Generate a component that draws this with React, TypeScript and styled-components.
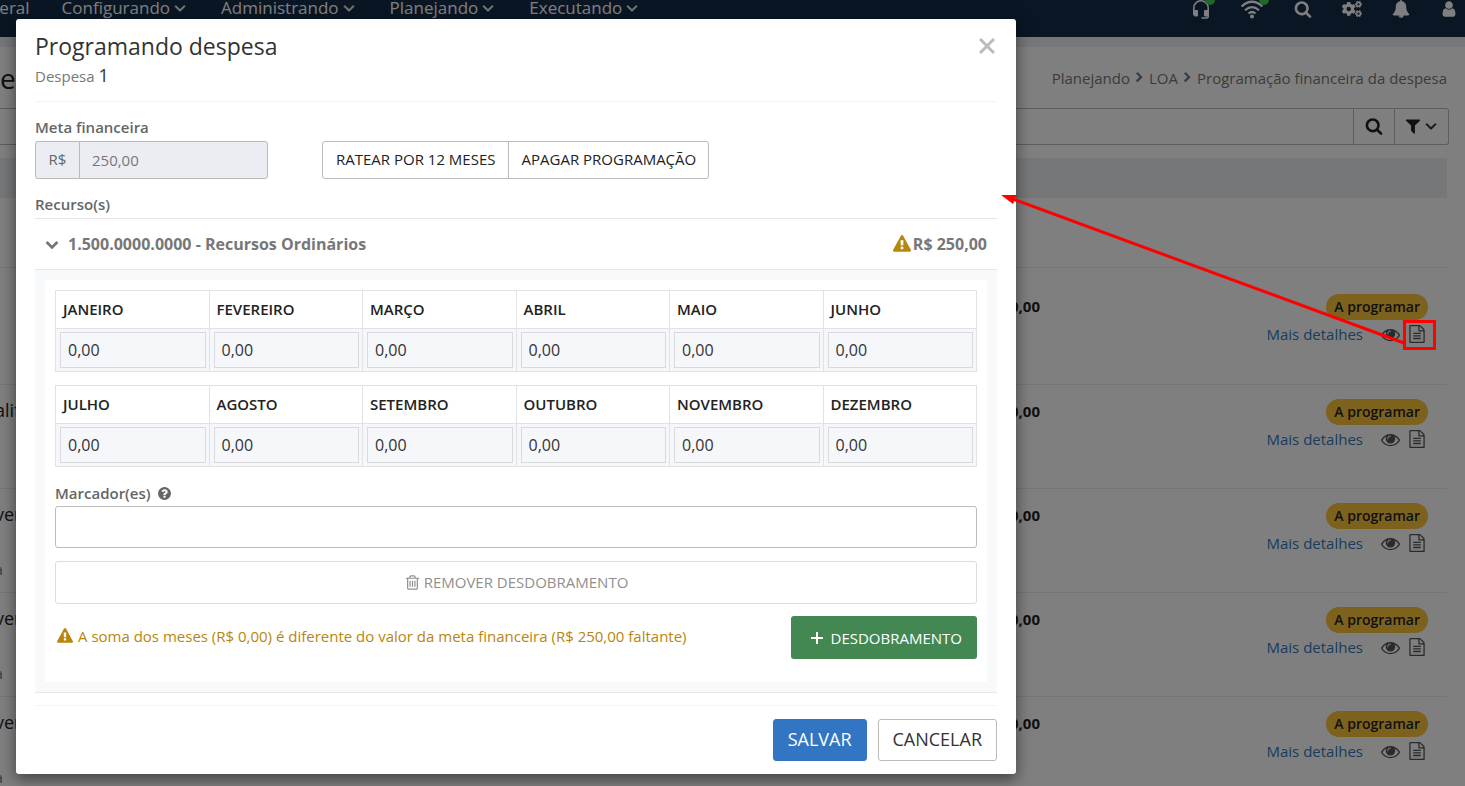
import React from "react";
import styled, { createGlobalStyle } from "styled-components";
import { FaCogs } from "react-icons/fa";

const GlobalStyle = createGlobalStyle`
  *, *::before, *::after { box-sizing: border-box; }
  body {
    margin: 0;
    background: #fff;
    color: #222;
    font: 15px/20px "Open Sans", "Noto Sans", sans-serif;
  }
  button, input { font: inherit; color: inherit; }
  button { cursor: pointer; }
`;

/* ---------- icons ---------- */

const paths = {
  search:
    "M1216 832q0-185-131.5-316.5t-316.5-131.5-316.5 131.5-131.5 316.5 131.5 316.5 316.5 131.5 316.5-131.5 131.5-316.5zm512 832q0 52-38 90t-90 38q-54 0-90-38l-343-342q-179 124-399 124-143 0-273.5-55.5t-225-150-150-225-55.5-273.5 55.5-273.5 150-225 225-150 273.5-55.5 273.5 55.5 225 150 150 225 55.5 273.5q0 220-124 399l343 343q37 37 37 90z",
  bell:
    "M912 1696q0-16-16-16-59 0-101.5-42.5t-42.5-101.5q0-16-16-16t-16 16q0 73 51.5 124.5t124.5 51.5q16 0 16-16zm816-288q0 52-38 90t-90 38h-448q0 106-75 181t-181 75-181-75-75-181h-448q-52 0-90-38t-38-90q50-42 91-88t85-119.5 74.5-158.5 50-206 19.5-260q0-152 117-282.5t307-158.5q-8-19-8-39 0-40 28-68t68-28 68 28 28 68q0 20-8 39 190 28 307 158.5t117 282.5q0 139 19.5 260t50 206 74.5 158.5 85 119.5 91 88z",
  user:
    "M1536 1399q0 109-62.5 187t-150.5 78h-854q-88 0-150.5-78t-62.5-187q0-85 8.5-160.5t31.5-152 58.5-131 94-89 134.5-34.5q131 128 313 128t313-128q76 0 134.5 34.5t94 89 58.5 131 31.5 152 8.5 160.5zm-256-887q0 159-112.5 271.5t-271.5 112.5-271.5-112.5-112.5-271.5 112.5-271.5 271.5-112.5 271.5 112.5 112.5 271.5z",
  filter:
    "M1595 295q17 41-14 70l-493 493v742q0 42-39 59-13 5-25 5-27 0-45-19l-256-256q-19-19-19-45v-486l-493-493q-31-29-14-70 17-39 59-39h1280q42 0 59 39z",
  eye:
    "M1664 960q-152-236-381-353 61 104 61 225 0 185-131.5 316.5t-316.5 131.5-316.5-131.5-131.5-316.5q0-121 61-225-229 117-381 353 133 205 333.5 326.5t434.5 121.5 434.5-121.5 333.5-326.5zm-720-384q0-20-14-34t-34-14q-125 0-214.5 89.5t-89.5 214.5q0 20 14 34t34 14 34-14 14-34q0-86 61-147t147-61q20 0 34-14t14-34zm848 384q0 34-20 69-140 230-376.5 368.5t-499.5 138.5-499.5-139-376.5-368q-20-35-20-69t20-69q140-229 376.5-368t499.5-139 499.5 139 376.5 368q20 35 20 69z",
  file:
    "M1596 380q28 28 48 76t20 88v1152q0 40-28 68t-68 28h-1344q-40 0-68-28t-28-68v-1600q0-40 28-68t68-28h896q40 0 88 20t76 48zm-444-244v376h376q-10-29-22-41l-313-313q-12-12-41-22zm384 1528v-1024h-416q-40 0-68-28t-28-68v-416h-768v1536h1280zm-1024-864q0-14 9-23t23-9h704q14 0 23 9t9 23v64q0 14-9 23t-23 9h-704q-14 0-23-9t-9-23v-64zm736 224q14 0 23 9t9 23v64q0 14-9 23t-23 9h-704q-14 0-23-9t-9-23v-64q0-14 9-23t23-9h704zm0 256q14 0 23 9t9 23v64q0 14-9 23t-23 9h-704q-14 0-23-9t-9-23v-64q0-14 9-23t23-9h704z",
  warning:
    "M1024 1375v-190q0-14-9.5-23.5t-22.5-9.5h-192q-13 0-22.5 9.5t-9.5 23.5v190q0 14 9.5 23.5t22.5 9.5h192q13 0 22.5-9.5t9.5-23.5zm-2-374l18-459q0-12-10-19-13-11-24-11h-220q-11 0-24 11-10 7-10 21l17 457q0 10 10 16.5t24 6.5h185q14 0 23.5-6.5t10.5-16.5zm-14-934l768 1408q35 63-2 126-17 29-46.5 46t-63.5 17h-1536q-34 0-63.5-17t-46.5-46q-37-63-2-126l768-1408q17-31 47-49t65-18 65 18 47 49z",
  question:
    "M1024 1376v-192q0-14-9-23t-23-9h-192q-14 0-23 9t-9 23v192q0 14 9 23t23 9h192q14 0 23-9t9-23zm256-672q0-88-55.5-163t-138.5-116-170-41q-243 0-371 213-15 24 8 42l132 100q7 6 19 6 16 0 25-12 53-68 86-92 34-24 86-24 48 0 85.5 26t37.5 59q0 38-20 61t-68 45q-63 28-115.5 86.5t-52.5 125.5v36q0 14 9 23t23 9h192q14 0 23-9t9-23q0-19 21.5-49.5t54.5-49.5q32-18 49-28.5t46-35 44.5-48 28-60.5 12.5-81zm384 192q0 209-103 385.5t-279.5 279.5-385.5 103-385.5-103-279.5-279.5-103-385.5 103-385.5 279.5-279.5 385.5-103 385.5 103 279.5 279.5 103 385.5z",
  angleDown:
    "M1395 736q0 13-10 23l-466 466q-10 10-23 10t-23-10l-466-466q-10-10-10-23t10-23l50-50q10-10 23-10t23 10l393 393 393-393q10-10 23-10t23 10l50 50q10 10 10 23z",
  chevronDown:
    "M1683 808l-742 741q-19 19-45 19t-45-19l-742-741q-19-19-19-45.5t19-45.5l166-165q19-19 45-19t45 19l531 531 531-531q19-19 45-19t45 19l166 165q19 19 19 45.5t-19 45.5z",
  chevronRight:
    "M1363 877l-742 742q-19 19-45 19t-45-19l-166-166q-19-19-19-45t19-45l531-531-531-531q-19-19-19-45t19-45l166-166q19-19 45-19t45 19l742 742q19 19 19 45t-19 45z",
  trash:
    "M704 736v576q0 14-9 23t-23 9h-64q-14 0-23-9t-9-23v-576q0-14 9-23t23-9h64q14 0 23 9t9 23zm256 0v576q0 14-9 23t-23 9h-64q-14 0-23-9t-9-23v-576q0-14 9-23t23-9h64q14 0 23 9t9 23zm256 0v576q0 14-9 23t-23 9h-64q-14 0-23-9t-9-23v-576q0-14 9-23t23-9h64q14 0 23 9t9 23zm128 724v-948h-896v948q0 22 7 40.5t14.5 27 10.5 8.5h832q3 0 10.5-8.5t14.5-27 7-40.5zm-672-1076h448l-48-117q-7-9-17-11h-317q-10 2-17 11zm928 32v64q0 14-9 23t-23 9h-96v948q0 83-47 143.5t-113 60.5h-832q-66 0-113-58.5t-47-141.5v-952h-96q-14 0-23-9t-9-23v-64q0-14 9-23t23-9h309l70-167q15-37 54-63t79-26h320q40 0 79 26t54 63l70 167h309q14 0 23 9t9 23z",
};

function Icon({ name, size, bold = false }: { name: keyof typeof paths; size: number; bold?: boolean }) {
  return (
    <svg
      width={size}
      height={size}
      viewBox="0 0 1792 1792"
      fill="currentColor"
      stroke={bold ? "currentColor" : "none"}
      strokeWidth={70}
      aria-hidden="true"
    >
      <path d={paths[name]} />
    </svg>
  );
}

const HeadsetIcon = () => (
  <svg width="18" height="20" viewBox="0 0 18 20" fill="none" stroke="currentColor" aria-hidden="true">
    <path d="M1.800 12V9a7.200 7.200 0 0 1 14.400 0v8q0 2-2 2H9.500" strokeWidth="1.600" />
    <path d="M1.500 11.500h4v5.500H3.500q-2 0-2-2zM16.500 11.500h-4v5.500h2q2 0 2-2z" fill="currentColor" strokeWidth="1" />
  </svg>
);

const WifiIcon = () => (
  <svg width="24" height="20" viewBox="0 0 24 20" fill="none" stroke="currentColor" strokeWidth="2.200" aria-hidden="true">
    <path d="M1.500 7.500Q12-2 22.500 7.500M5 11.200Q12 5 19 11.200M8.500 14.500Q12 11.500 15.500 14.500" />
    <circle cx="12" cy="17.500" r="2" fill="currentColor" stroke="none" />
  </svg>
);

const PlusIcon = () => (
  <svg width="12" height="12" viewBox="0 0 12 12" stroke="currentColor" strokeWidth="2" aria-hidden="true">
    <path d="M6 0v12M0 6h12" />
  </svg>
);

const CloseIcon = () => (
  <svg width="16" height="16" viewBox="0 0 16 16" stroke="currentColor" strokeWidth="3" aria-hidden="true">
    <path d="M1 1l14 14M15 1L1 15" />
  </svg>
);

/* ---------- page behind the dialog ---------- */

const Shell = styled.div`
  position: relative;
  height: 100vh;
  overflow: hidden;
`;

const NavBar = styled.nav`
  display: flex;
  align-items: flex-start;
  justify-content: space-between;
  height: 37px;
  background: #142c48;
  color: #fff;
`;

const NavMenu = styled.div`
  display: flex;
  gap: 32px;
  margin-left: -13px;
`;

const NavLink = styled.a`
  display: flex;
  align-items: center;
  gap: 1px;
  height: 16px;
  font-size: 17px;
  line-height: 16px;
  color: inherit;
  text-decoration: none;
`;

const NavTools = styled.div`
  display: flex;
  gap: 30px;
  padding-right: 7px;
`;

const NavTool = styled.button`
  position: relative;
  display: flex;
  align-items: center;
  justify-content: center;
  height: 18px;
  padding: 0;
  border: 0;
  background: none;
`;

const StatusDot = styled.span`
  position: absolute;
  top: -5px;
  right: -5px;
  width: 10px;
  height: 10px;
  border-radius: 50%;
  background: #3ad24e;
`;

const Strip = styled.div`
  height: 10px;
  background: #ebeef3;
`;

const Main = styled.main`
  padding-right: 18px;
`;

const PageHead = styled.header`
  display: flex;
  align-items: center;
  justify-content: space-between;
  height: 61px;
`;

const PageTitle = styled.h1`
  margin: 0;
  font-size: 28px;
  font-weight: 400;
  line-height: 32px;
`;

const Breadcrumb = styled.nav`
  display: flex;
  align-items: center;
  gap: 4px;
  color: #777;
  a { color: inherit; text-decoration: none; }
`;

const SearchBar = styled.form`
  display: flex;
  height: 37px;
  margin: 0 -2px 13px 0;
  border: 1px solid #bbb;
  border-left: 0;
  border-radius: 0 3px 3px 0;
`;

const SearchInput = styled.input`
  flex: 1;
  border: 0;
  background: none;
`;

const SearchButton = styled.button<{ $wide?: boolean }>`
  display: flex;
  align-items: center;
  justify-content: center;
  width: ${(p) => (p.$wide ? 54 : 41)}px;
  padding: 0 0 2px;
  border: 0;
  border-left: 1px solid #bbb;
  background: none;
`;

const ListHead = styled.div`
  height: 40px;
  background: #ebeef3;
`;

const List = styled.ul`
  margin: 0;
  padding: 69px 0 0;
  list-style: none;
`;

const Row = styled.li<{ $first?: boolean }>`
  display: grid;
  grid-template-columns: 1fr 388px;
  height: ${(p) => (p.$first ? 117 : 104)}px;
  padding: ${(p) => (p.$first ? 26 : 14)}px 19px 0 0;
  border-top: 1px solid #eaeaea;
`;

const RowText = styled.div`
  display: flex;
  justify-content: space-between;
  margin-left: -5px;
`;

const RowName = styled.div`
  font-size: 18px;
  line-height: 22px;
  small {
    display: block;
    margin-top: 34px;
    color: #57788a;
    font-size: 14px;
  }
`;

const Amount = styled.strong`
  font-weight: 700;
  line-height: 24px;
`;

const RowActions = styled.div`
  display: flex;
  flex-direction: column;
  align-items: flex-end;
  gap: 4px;
`;

const Badge = styled.span`
  padding: 3px 8px;
  border-radius: 13px;
  background: #fac43c;
  font-size: 14px;
  font-weight: 600;
`;

const ActionLine = styled.div`
  display: flex;
  align-items: center;
  margin-right: 2px;
`;

const DetailLink = styled.a`
  margin-right: 18px;
  color: #337ab7;
  text-decoration: none;
`;

const IconButton = styled.button`
  display: flex;
  margin-left: 8px;
  padding: 0;
  border: 0;
  background: none;
  color: #555;
  &:first-of-type { margin-left: 0; }
`;

/* ---------- dialog ---------- */

const Backdrop = styled.div`
  position: absolute;
  inset: 0;
  padding: 19px 16px;
  background: rgba(0, 0, 0, 0.5);
`;

const Dialog = styled.section`
  width: 100%;
  max-width: 1000px;
  padding: 0 19px 13px;
  border-radius: 3px;
  background: #fff;
  box-shadow: 0 5px 15px rgba(0, 0, 0, 0.5);
`;

const DialogHead = styled.header`
  display: flex;
  align-items: flex-start;
  justify-content: space-between;
  height: 83px;
  padding-top: 11px;
  border-bottom: 1px solid #f4f4f4;
`;

const DialogTitle = styled.h2`
  margin: 0;
  font-size: 23px;
  font-weight: 400;
  line-height: 32px;
  color: #333;
`;

const Subtitle = styled.p`
  margin: 1px 0 0;
  color: #777;
  line-height: 24px;
  span { font-size: 18px; color: #333; }
`;

const CloseButton = styled.button`
  display: flex;
  padding: 8px 2px;
  border: 0;
  background: none;
  color: #bbb;
`;

const FieldLabel = styled.label`
  display: flex;
  align-items: center;
  gap: 6px;
  height: 20px;
  font-weight: 600;
  color: #666;
`;

const GoalRow = styled.div`
  display: flex;
  align-items: flex-end;
  gap: 54px;
  padding: 15px 0;
`;

const GoalField = styled.div`
  width: 233px;
`;

const InputGroup = styled.div`
  display: flex;
  height: 38px;
  margin-top: 4px;
  border: 1px solid #bbb;
  border-radius: 3px;
  background: #ebedf2;
  color: #777;
`;

const Addon = styled.span`
  width: 44px;
  border-right: 1px solid #bbb;
  line-height: 34px;
  text-align: center;
  color: #666;
`;

const GoalInput = styled.input`
  flex: 1;
  min-width: 0;
  padding: 0 12px;
  border: 0;
  background: none;
`;

const ButtonGroup = styled.div`
  display: flex;
`;

const GroupButton = styled.button`
  height: 38px;
  padding: 0 12px 2px 13px;
  border: 1px solid #bbb;
  border-radius: 3px 0 0 3px;
  background: #fff;
  & + & {
    margin-left: -1px;
    border-radius: 0 3px 3px 0;
  }
`;

const SectionTitle = styled.h3`
  margin: 0;
  padding-bottom: 4px;
  border-bottom: 1px solid #e5e5e5;
  font-size: 15px;
  font-weight: 600;
  line-height: 20px;
  color: #666;
`;

const ResourceToggle = styled.button`
  display: flex;
  align-items: center;
  width: 100%;
  height: 51px;
  padding: 0 10px;
  border: 0;
  border-bottom: 1px solid #e5e5e5;
  background: none;
  font-size: 16px;
  font-weight: 700;
  color: #777;
  span { margin-left: 9px; }
  strong { margin-left: 2px; font-weight: 700; }
`;

const WarnMark = styled.i`
  display: flex;
  margin-left: auto;
  color: #b8860b;
`;

const Panel = styled.div`
  padding: 10px;
  border-bottom: 1px solid #e3e6ea;
  background: #f7f9fb;
`;

const PanelBody = styled.div`
  padding: 10px 10px 23px;
  background: #fff;
`;

const MonthTable = styled.table`
  width: 100%;
  margin-bottom: 13px;
  border-collapse: collapse;
  table-layout: fixed;
  th, td { border: 1px solid #e0e2e6; }
  th {
    height: 38px;
    padding: 0 7px 2px;
    text-align: left;
    font-weight: 600;
  }
  td {
    padding: 3px 3px 3px 4px;
    background: #f5f7fb;
  }
`;

const MonthInput = styled.input`
  display: block;
  width: 100%;
  height: 36px;
  padding: 0 7px;
  border: 1px solid #d9dadc;
  border-radius: 0;
  background: none;
  font-size: 16px;
  color: #333;
`;

const TagField = styled.div`
  padding-top: 3px;
`;

const TagInput = styled.input`
  display: block;
  width: 100%;
  height: 42px;
  margin: 3px 0 13px;
  padding: 0 12px;
  border: 1px solid #bbb;
  border-radius: 3px;
`;

const RemoveButton = styled.button`
  display: flex;
  align-items: center;
  justify-content: center;
  gap: 3px;
  width: 100%;
  height: 43px;
  padding-bottom: 2px;
  border: 1px solid #ddd;
  border-radius: 3px;
  background: #fff;
  color: #909090;
`;

const SplitLine = styled.div`
  display: flex;
  justify-content: space-between;
  margin-top: 12px;
`;

const WarnText = styled.p`
  display: flex;
  align-items: center;
  gap: 5px;
  height: 40px;
  margin: 0;
  padding-left: 2px;
  color: #b8860b;
`;

const AddButton = styled.button`
  display: flex;
  align-items: center;
  gap: 8px;
  height: 43px;
  padding: 0 15px 0 20px;
  border: 0;
  border-radius: 3px;
  background: #438753;
  color: #fff;
`;

const DialogFoot = styled.footer`
  display: flex;
  justify-content: flex-end;
  gap: 11px;
  margin-top: 12px;
  padding-top: 13px;
  border-top: 1px solid #f4f4f4;
`;

const FootButton = styled.button<{ $primary?: boolean }>`
  height: 42px;
  padding: 0 14px 2px;
  border: 1px solid ${(p) => (p.$primary ? "#3276c3" : "#bbb")};
  border-radius: 3px;
  background: ${(p) => (p.$primary ? "#3276c3" : "#fff")};
  color: ${(p) => (p.$primary ? "#fff" : "#333")};
  font-size: 18px;
`;

/* Callout: box round the edit icon, with an arrow back to the dialog. */
const Callout = styled.svg`
  position: absolute;
  top: 190px;
  right: 25px;
  pointer-events: none;
`;

/* ---------- data ---------- */

const menus = ["Configurando", "Administrando", "Planejando", "Executando"];

const semesters = [
  ["JANEIRO", "FEVEREIRO", "MARÇO", "ABRIL", "MAIO", "JUNHO"],
  ["JULHO", "AGOSTO", "SETEMBRO", "OUTUBRO", "NOVEMBRO", "DEZEMBRO"],
];

const expenses = [
  { name: "", note: "" },
  { name: "alif", note: "" },
  { name: "ver", note: "a" },
  { name: "ver", note: "a" },
  { name: "ver", note: "a" },
];

export default function App() {
  return (
    <Shell>
      <GlobalStyle />
      <NavBar>
        <NavMenu>
          <NavLink href="#">Geral</NavLink>
          {menus.map((menu) => (
            <NavLink href="#" key={menu}>
              {menu}
              <Icon name="angleDown" size={18} bold />
            </NavLink>
          ))}
        </NavMenu>
        <NavTools>
          <NavTool aria-label="Suporte"><HeadsetIcon /><StatusDot /></NavTool>
          <NavTool aria-label="Conexão"><WifiIcon /><StatusDot /></NavTool>
          <NavTool aria-label="Buscar"><Icon name="search" size={18} /></NavTool>
          <NavTool aria-label="Ajustes"><FaCogs size={20} /></NavTool>
          <NavTool aria-label="Avisos"><Icon name="bell" size={18} /></NavTool>
          <NavTool aria-label="Perfil"><Icon name="user" size={18} /></NavTool>
        </NavTools>
      </NavBar>
      <Strip />
      <Main>
        <PageHead>
          <PageTitle>e</PageTitle>
          <Breadcrumb>
            <a href="#">Planejando</a>
            <Icon name="chevronRight" size={11} />
            <a href="#">LOA</a>
            <Icon name="chevronRight" size={11} />
            <span>Programação financeira da despesa</span>
          </Breadcrumb>
        </PageHead>
        <SearchBar>
          <SearchInput aria-label="Pesquisar" />
          <SearchButton type="button" aria-label="Pesquisar"><Icon name="search" size={18} /></SearchButton>
          <SearchButton type="button" $wide aria-label="Filtros">
            <Icon name="filter" size={18} />
            <Icon name="angleDown" size={18} bold />
          </SearchButton>
        </SearchBar>
        <ListHead />
        <List>
          {expenses.map((expense, i) => (
            <Row key={i} $first={i === 0}>
              <RowText>
                <RowName>
                  {expense.name}
                  {expense.note && <small>{expense.note}</small>}
                </RowName>
                <Amount>0,00</Amount>
              </RowText>
              <RowActions>
                <Badge>A programar</Badge>
                <ActionLine>
                  <DetailLink href="#">Mais detalhes</DetailLink>
                  <IconButton aria-label="Visualizar"><Icon name="eye" size={19} /></IconButton>
                  <IconButton aria-label="Programar"><Icon name="file" size={18} /></IconButton>
                </ActionLine>
              </RowActions>
            </Row>
          ))}
        </List>
      </Main>

      <Backdrop>
        <Dialog role="dialog" aria-labelledby="dialog-title">
          <DialogHead>
            <div>
              <DialogTitle id="dialog-title">Programando despesa</DialogTitle>
              <Subtitle>Despesa <span>1</span></Subtitle>
            </div>
            <CloseButton aria-label="Fechar"><CloseIcon /></CloseButton>
          </DialogHead>

          <GoalRow>
            <GoalField>
              <FieldLabel htmlFor="goal">Meta financeira</FieldLabel>
              <InputGroup>
                <Addon>R$</Addon>
                <GoalInput id="goal" defaultValue="250,00" readOnly />
              </InputGroup>
            </GoalField>
            <ButtonGroup>
              <GroupButton>RATEAR POR 12 MESES</GroupButton>
              <GroupButton>APAGAR PROGRAMAÇÃO</GroupButton>
            </ButtonGroup>
          </GoalRow>

          <SectionTitle>Recurso(s)</SectionTitle>
          <ResourceToggle aria-expanded="true">
            <Icon name="chevronDown" size={14} />
            <span>1.500.0000.0000 - Recursos Ordinários</span>
            <WarnMark><Icon name="warning" size={18} /></WarnMark>
            <strong>R$ 250,00</strong>
          </ResourceToggle>

          <Panel>
            <PanelBody>
              {semesters.map((months) => (
                <MonthTable key={months[0]}>
                  <thead>
                    <tr>{months.map((m) => <th key={m} id={m} scope="col">{m}</th>)}</tr>
                  </thead>
                  <tbody>
                    <tr>
                      {months.map((m) => (
                        <td key={m}><MonthInput aria-labelledby={m} defaultValue="0,00" /></td>
                      ))}
                    </tr>
                  </tbody>
                </MonthTable>
              ))}
              <TagField>
                <FieldLabel htmlFor="tags">
                  Marcador(es)
                  <Icon name="question" size={15} />
                </FieldLabel>
                <TagInput id="tags" />
              </TagField>
              <RemoveButton><Icon name="trash" size={17} />REMOVER DESDOBRAMENTO</RemoveButton>
              <SplitLine>
                <WarnText>
                  <Icon name="warning" size={16} />
                  A soma dos meses (R$ 0,00) é diferente do valor da meta financeira (R$ 250,00 faltante)
                </WarnText>
                <AddButton><PlusIcon />DESDOBRAMENTO</AddButton>
              </SplitLine>
            </PanelBody>
          </Panel>

          <DialogFoot>
            <FootButton $primary>SALVAR</FootButton>
            <FootButton>CANCELAR</FootButton>
          </DialogFoot>
        </Dialog>
      </Backdrop>

      <Callout width="440" height="170" viewBox="0 0 440 170" aria-hidden="true">
        <path d="M404 153L10 8" stroke="#f00" strokeWidth="3" />
        <path d="M1 5l16 0-4 9z" fill="#f00" />
        <rect x="404.500" y="131.500" width="30" height="27" fill="none" stroke="#f00" strokeWidth="3" />
      </Callout>
    </Shell>
  );
}
